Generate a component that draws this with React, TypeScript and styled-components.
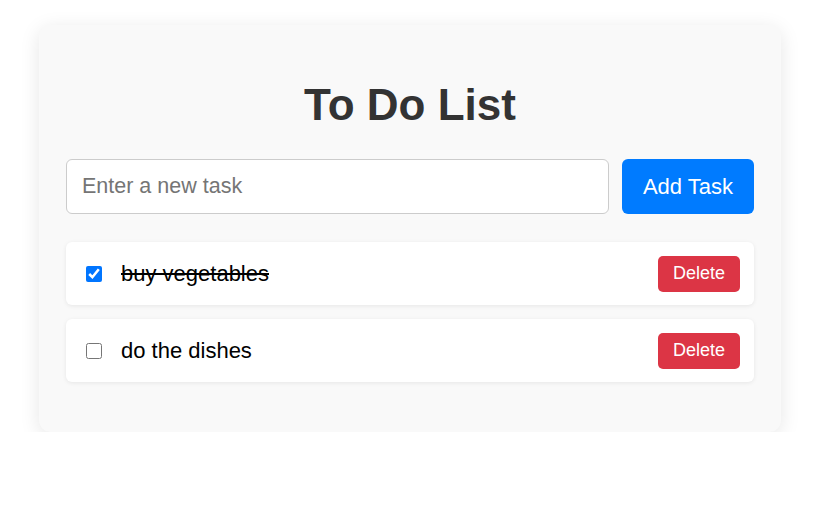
import React, { useState } from "react";
import styled, { createGlobalStyle } from "styled-components";

const Global = createGlobalStyle`
  html, body { margin: 0; padding: 0; background: #ffffff; }
  body { font-family: "Liberation Sans", Arial, sans-serif; }
  * { box-sizing: border-box; }
`;

const Page = styled.div`
  padding: 25px 0 0 39px;
`;

const Card = styled.div`
  width: 742px;
  min-height: 407px;
  background: #f9f9f9;
  border-radius: 12px;
  box-shadow: 0 4px 20px rgba(0, 0, 0, 0.1);
  padding: 56px 27px 50px;
  display: flex;
  flex-direction: column;
`;

const Title = styled.h1`
  margin: 0 0 30px;
  font-size: 44px;
  line-height: 48px;
  font-weight: 700;
  color: #333333;
  text-align: center;
`;

const Form = styled.form`
  display: flex;
  gap: 13px;
  height: 55px;
  margin-bottom: 28px;
`;

const TaskInput = styled.input`
  flex: 1;
  min-width: 0;
  height: 100%;
  border: 1px solid #cccccc;
  border-radius: 6px;
  background: #ffffff;
  padding: 0 15px;
  font-family: inherit;
  font-size: 21.5px;
  color: #333;
  outline: none;
  &::placeholder { color: #757575; }
`;

const AddButton = styled.button`
  height: 100%;
  padding: 0 21px;
  border: none;
  border-radius: 6px;
  background: #007bff;
  color: #ffffff;
  font-family: inherit;
  font-size: 22px;
  cursor: pointer;
`;

const List = styled.ul`
  list-style: none;
  margin: 0;
  padding: 0;
  display: flex;
  flex-direction: column;
  gap: 14px;
`;

const Item = styled.li`
  height: 63px;
  display: flex;
  align-items: center;
  padding: 0 14px 0 20px;
  background: #ffffff;
  border-radius: 6px;
  box-shadow: 0 1px 4px rgba(0, 0, 0, 0.08);
`;

const Check = styled.input`
  width: 16px;
  height: 16px;
  margin: 0 19px 0 0;
  accent-color: #0075ff;
`;

const Label = styled.span<{ $done: boolean }>`
  flex: 1;
  font-size: 22px;
  color: #000000;
  text-decoration: ${(p) => (p.$done ? "line-through" : "none")};
`;

const DeleteButton = styled.button`
  height: 36px;
  padding: 0 15px;
  border: none;
  border-radius: 5px;
  background: #dc3545;
  color: #ffffff;
  font-family: inherit;
  font-size: 18px;
  cursor: pointer;
`;

type Task = { id: number; text: string; done: boolean };

export default function App() {
  const [tasks, setTasks] = useState<Task[]>([
    { id: 1, text: "buy vegetables", done: true },
    { id: 2, text: "do the dishes", done: false },
  ]);
  const [value, setValue] = useState("");

  const add = (e: React.FormEvent) => {
    e.preventDefault();
    if (!value.trim()) return;
    setTasks([...tasks, { id: Date.now(), text: value.trim(), done: false }]);
    setValue("");
  };

  return (
    <>
      <Global />
      <Page>
        <Card>
          <Title>To Do List</Title>
          <Form onSubmit={add}>
            <TaskInput
              placeholder="Enter a new task"
              value={value}
              onChange={(e) => setValue(e.target.value)}
            />
            <AddButton type="submit">Add Task</AddButton>
          </Form>
          <List>
            {tasks.map((t) => (
              <Item key={t.id}>
                <Check
                  type="checkbox"
                  checked={t.done}
                  onChange={() =>
                    setTasks(tasks.map((x) => (x.id === t.id ? { ...x, done: !x.done } : x)))
                  }
                />
                <Label $done={t.done}>{t.text}</Label>
                <DeleteButton onClick={() => setTasks(tasks.filter((x) => x.id !== t.id))}>
                  Delete
                </DeleteButton>
              </Item>
            ))}
          </List>
        </Card>
      </Page>
    </>
  );
}
